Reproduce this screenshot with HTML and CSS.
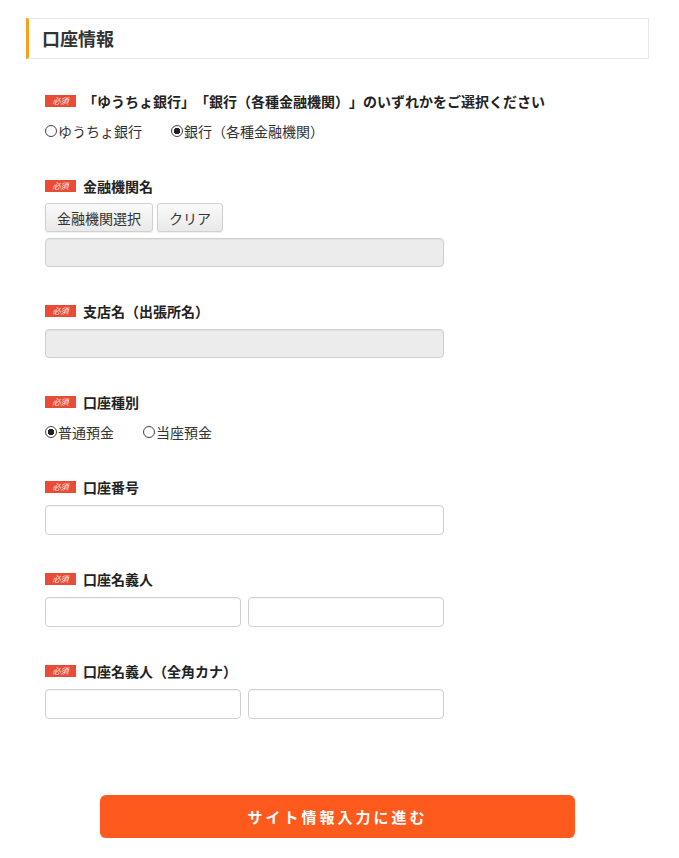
FILE: index.html
```html
<!DOCTYPE html>
<html lang="ja">
<head>
<meta charset="utf-8">
<link rel="stylesheet" href="styles.css">
</head>
<body>
<div class="page">
  <h2 class="section-title">口座情報</h2>
  <div class="form">
    <div class="field first">
      <div class="label"><span class="req">必須</span>「ゆうちょ銀行」「銀行（各種金融機関）」のいずれかをご選択ください</div>
      <div class="radios">
        <span class="radio"><span class="rb"></span>ゆうちょ銀行</span>
        <span class="radio"><span class="rb on"></span>銀行（各種金融機関）</span>
      </div>
    </div>
    <div class="field after-radio">
      <div class="label"><span class="req">必須</span>金融機関名</div>
      <div class="btns">
        <button class="btn">金融機関選択</button>
        <button class="btn">クリア</button>
      </div>
      <div class="input disabled gap6"></div>
    </div>
    <div class="field">
      <div class="label"><span class="req">必須</span>支店名（出張所名）</div>
      <div class="input disabled"></div>
    </div>
    <div class="field">
      <div class="label"><span class="req">必須</span>口座種別</div>
      <div class="radios">
        <span class="radio"><span class="rb on"></span>普通預金</span>
        <span class="radio"><span class="rb"></span>当座預金</span>
      </div>
    </div>
    <div class="field after-radio">
      <div class="label"><span class="req">必須</span>口座番号</div>
      <div class="input"></div>
    </div>
    <div class="field">
      <div class="label"><span class="req">必須</span>口座名義人</div>
      <div class="pair">
        <div class="input half"></div>
        <div class="input half"></div>
      </div>
    </div>
    <div class="field">
      <div class="label"><span class="req">必須</span>口座名義人（全角カナ）</div>
      <div class="pair">
        <div class="input half"></div>
        <div class="input half"></div>
      </div>
    </div>
  </div>
  <div class="submit-wrap">
    <button class="submit">サイト情報入力に進む</button>
  </div>
</div>
</body>
</html>
```
FILE: styles.css
```css
* { box-sizing: border-box; }
html, body { margin: 0; padding: 0; background: #fff; }
body {
  font-family: "Noto Sans CJK JP", "Noto Sans", sans-serif;
  color: #333;
  text-spacing-trim: space-all;
}
.page { padding: 18px 30px 0 26px; }
.section-title {
  margin: 0;
  height: 41px;
  border: 1px solid #e8e8e8;
  border-left: 3px solid #f5a11c;
  font-size: 18px;
  font-weight: bold;
  line-height: 39px;
  padding-left: 13px;
  color: #333;
  width: 623px;
}
.form { padding-left: 19px; padding-top: 32px; }
.field { margin-top: 34px; }
.field.first { margin-top: 0; }
.field.after-radio { margin-top: 35px; }
.label {
  display: flex;
  align-items: center;
  height: 20px;
  font-size: 14px;
  font-weight: bold;
  color: #222;
  white-space: nowrap;
}
.req {
  display: inline-block;
  width: 31px;
  height: 12px;
  background: #ea4b37;
  color: #fff;
  font-size: 8px;
  font-style: italic;
  font-weight: normal;
  line-height: 12px;
  text-align: center;
  margin-right: 7px;
}
.radios {
  margin-top: 10px;
  height: 20px;
  display: flex;
  align-items: center;
  gap: 29px;
  font-size: 14px;
  color: #333;
}
.radio { display: flex; align-items: center; }
.rb {
  width: 12px;
  height: 12px;
  border: 1px solid #444;
  border-radius: 50%;
  margin-right: 1px;
  background: #fff;
}
.rb.on { background: radial-gradient(circle, #222 0 3px, #fff 3.5px); }
.btns { margin-top: 7px; display: flex; gap: 4px; }
.btn {
  height: 29px;
  padding: 0 11px;
  font-family: inherit;
  font-size: 14px;
  color: #333;
  background: linear-gradient(#fafafa, #e9e9e9);
  border: 1px solid #d0d0d0;
  border-radius: 3px;
  box-shadow: 0 1px 1px rgba(0,0,0,0.08);
}
.input {
  margin-top: 8px;
  width: 399px;
  height: 30px;
  border: 1px solid #cfcfcf;
  border-radius: 4px;
  background: #fff;
  box-shadow: inset 0 1px 1px rgba(0,0,0,0.04);
}
.input.gap6 { margin-top: 6px; }
.input.disabled { background: #ececec; height: 29px; }
.pair { margin-top: 8px; display: flex; gap: 7px; width: 399px; }
.pair .input { margin-top: 0; width: 196px; }
.submit-wrap { margin-top: 76px; padding-left: 74px; }
.submit {
  width: 475px;
  height: 43px;
  border: none;
  border-radius: 6px;
  background: #ff5a1e;
  color: #fff;
  font-family: inherit;
  font-size: 15px;
  font-weight: bold;
  letter-spacing: 3px;
  box-shadow: 0 2px 2px rgba(0,0,0,0.15);
}
```
